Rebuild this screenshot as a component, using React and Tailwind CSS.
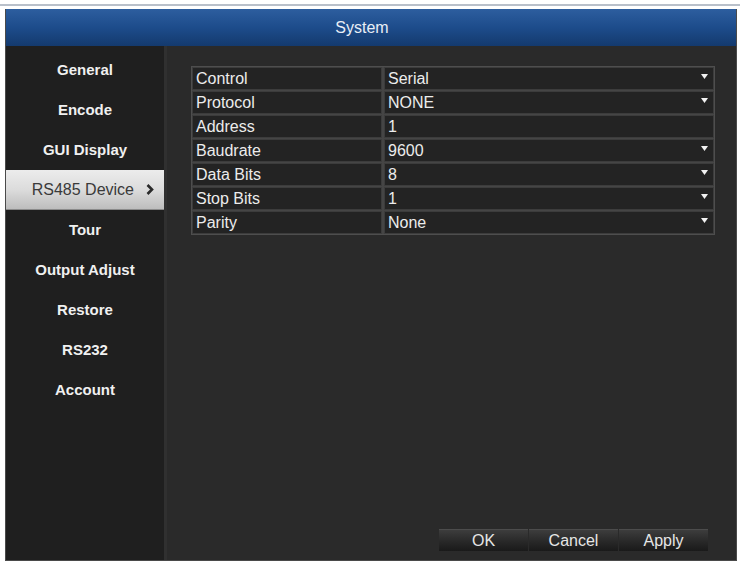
import React from 'react';

const menu = ['General', 'Encode', 'GUI Display', 'RS485 Device', 'Tour', 'Output Adjust', 'Restore', 'RS232', 'Account'];

const rows = [
  { label: 'Control', value: 'Serial', drop: true },
  { label: 'Protocol', value: 'NONE', drop: true },
  { label: 'Address', value: '1', drop: false },
  { label: 'Baudrate', value: '9600', drop: true },
  { label: 'Data Bits', value: '8', drop: true },
  { label: 'Stop Bits', value: '1', drop: true },
  { label: 'Parity', value: 'None', drop: true },
];

function DropArrow() {
  return (
    <svg width="7" height="5" viewBox="0 0 7 5" className="absolute right-[5px] top-[6px]">
      <path d="M0 0 H7 L3.5 5 Z" fill="#f2f2f2" />
    </svg>
  );
}

export default function App() {
  return (
    <div className="w-[740px] h-[565px] bg-white overflow-hidden pt-[4px]" style={{ fontFamily: '"Liberation Sans", Arial, sans-serif' }}>
      <div className="h-[2px] bg-[#b9c0ca]" />
      <div className="mt-[3px] ml-[5px] mr-[3px] h-[552px] flex flex-col border-l border-r border-b border-[#4a4a4a]">
        {/* Title bar */}
        <div className="h-[37px] flex items-center justify-center pr-[18px] bg-gradient-to-b from-[#2d5e9f] via-[#1d4c8b] to-[#143a6e] text-[16px] text-[#e9eef6]">
          System
        </div>

        <div className="flex flex-1 min-h-0">
          {/* Sidebar */}
          <div className="w-[158px] bg-[#1f1f1f] pt-[4px] flex flex-col">
            {menu.map(item =>
              item === 'RS485 Device' ? (
                <div
                  key={item}
                  className="h-[40px] flex items-center justify-end pr-[10px] gap-[12px] bg-gradient-to-b from-[#ececec] via-[#dcdcdc] to-[#bdbdbd] border-b border-[#8a8a8a] text-[16px] text-[#3a3a3a]"
                >
                  <span>RS485 Device</span>
                  <svg width="8" height="11" viewBox="0 0 8 11">
                    <path d="M1.5 1 L6 5.5 L1.5 10" stroke="#2a2a2a" strokeWidth="2.6" fill="none" />
                  </svg>
                </div>
              ) : (
                <div key={item} className="h-[40px] flex items-center justify-center text-[15px] font-bold text-[#f0f0f0]">
                  {item}
                </div>
              )
            )}
          </div>
          <div className="w-[3px] bg-[#303030]" />

          {/* Content */}
          <div className="flex-1 bg-[#2a2a2a] flex flex-col pl-[24px] pr-[21px] pt-[20px] pb-[9px]">
            <div className="border border-[#4e4e4e] bg-[#454545] flex flex-col gap-[1px]">
              {rows.map(r => (
                <div key={r.label} className="h-[23px] flex gap-[2px] text-[16px] text-[#ececec]">
                  <div className="w-[190px] bg-[#232323] border border-[#3c3c3c] pl-[3px] flex items-center leading-none">
                    {r.label}
                  </div>
                  <div className="relative flex-1 bg-[#232323] border border-[#3c3c3c] pl-[3px] flex items-center leading-none">
                    {r.value}
                    {r.drop && <DropArrow />}
                  </div>
                </div>
              ))}
            </div>

            <div className="flex-1" />

            <div className="flex justify-end gap-[1px] pr-[7px]">
              {['OK', 'Cancel', 'Apply'].map(b => (
                <div
                  key={b}
                  className="w-[89px] h-[22px] flex items-center justify-center bg-gradient-to-b from-[#3d3d3d] via-[#2a2a2a] to-[#1a1a1a] border-t border-[#4c4c4c] text-[16px] text-[#e6e6e6]"
                >
                  {b}
                </div>
              ))}
            </div>
          </div>
        </div>
      </div>
    </div>
  );
}
